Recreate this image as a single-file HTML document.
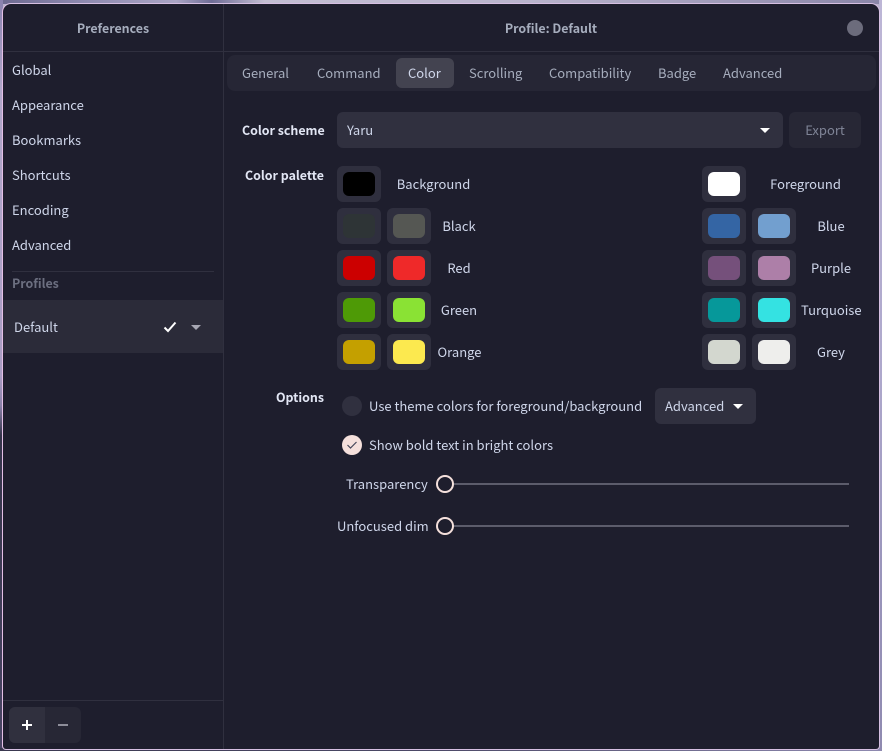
<!DOCTYPE html>
<html><head><meta charset="utf-8">
<style>
html,body{margin:0;padding:0;width:882px;height:751px;overflow:hidden;background:#b9b3cc}
body{position:relative;font-family:"Noto Sans CJK JP","Liberation Sans",sans-serif;font-size:13px;color:#cfd6ea}
#bgt{position:absolute;left:0;top:0;width:882px;height:4px;background:linear-gradient(90deg,#6d6a90 0,#8f8bb0 10%,#aaa5c4 20%,#6f6d96 24%,#c3bed2 30%,#b9b4cc 60%,#8a86a8 100%)}
#bgl{position:absolute;left:0;top:0;width:3px;height:751px;background:linear-gradient(180deg,#8a82ae 0,#b0a6c8 12%,#a99cc2 50%,#8a80a8 54%,#35344a 58%,#3a384f 70%,#4a4565 100%)}
#bgr{position:absolute;right:0;top:0;width:3px;height:751px;background:linear-gradient(180deg,#bdb6d6 0,#aea8cc 50%,#9b96bc 75%,#8f8ab0 100%)}
#bgb{position:absolute;left:0;bottom:0;width:882px;height:3px;background:linear-gradient(90deg,#3a384f,#4d4a68 50%,#8f8ab0)}
#win{position:absolute;left:2px;top:3px;width:876px;height:745px;background:#1e1e2d;border:1px solid #d6bfe2;border-left-color:#e4bfe6;border-radius:9px 9px 4px 4px;overflow:hidden}
.a{position:absolute;box-sizing:border-box}
.t{position:absolute;white-space:nowrap;line-height:20px;height:20px}
.c{text-align:center}
.b{font-weight:700;font-size:12.4px}
.ln{position:absolute;background:#30303f}
.sw{position:absolute;width:44px;height:36px;background:#2f2f3e;border-radius:6px}
.sw i{position:absolute;left:6px;top:6px;width:32px;height:24px;border-radius:6px;display:block}
.arrow{position:absolute;width:0;height:0;border-left:5px solid transparent;border-right:5px solid transparent;border-top:5px solid #fff}
.track{position:absolute;left:452px;width:397px;height:2px;background:#5c5c6b}
.thumb{position:absolute;left:436px;width:18px;height:18px;box-sizing:border-box;border:2px solid #f5e0dc;border-radius:50%;background:#1e1e2d}
#win>*{margin-left:-3px;margin-top:-4px}
</style></head>
<body>
<div id="bgt"></div><div id="bgl"></div><div id="bgr"></div><div id="bgb"></div>
<div id="win">
<div class="ln" style="left:223px;top:0;width:1px;height:760px"></div>
<div class="ln" style="left:0;top:51px;width:890px;height:1px"></div>
<div class="ln" style="left:0;top:700px;width:223px;height:1px"></div>
<div class="ln" style="left:12px;top:271px;width:202px;height:1px"></div>

<div class="t c b" style="left:3px;top:18px;width:220px;color:#a6adbd">Preferences</div>
<div class="t c b" style="left:224px;top:18px;width:654px;color:#a6adbd">Profile: Default</div>
<div class="a" style="left:847px;top:20px;width:16px;height:16px;border-radius:50%;background:#6c6c7c"></div>

<div class="t" style="left:12px;top:60px">Global</div>
<div class="t" style="left:12px;top:95px">Appearance</div>
<div class="t" style="left:12px;top:130px">Bookmarks</div>
<div class="t" style="left:12px;top:165px">Shortcuts</div>
<div class="t" style="left:12px;top:200px">Encoding</div>
<div class="t" style="left:12px;top:235px">Advanced</div>
<div class="t b" style="left:12px;top:273px;color:#6c6f80">Profiles</div>
<div class="a" style="left:3px;top:300px;width:220px;height:53px;background:#2b2b39"></div>
<div class="t" style="left:14px;top:317px">Default</div>
<svg class="a" style="left:163px;top:320px" width="14" height="14" viewBox="0 0 14 14"><path d="M1.5 7.5L5 11L12.5 2.5" fill="none" stroke="#fff" stroke-width="2"/></svg>
<div class="arrow" style="left:191px;top:325px;border-top-color:#a6a6b2"></div>

<div class="a" style="left:9px;top:707px;width:72px;height:36px;background:#272735;border-radius:6px"></div>
<div class="a" style="left:9px;top:707px;width:36px;height:36px;background:#30303e;border-radius:6px 0 0 6px"></div>
<div class="a" style="left:22px;top:724px;width:10px;height:2px;background:#fff"></div>
<div class="a" style="left:26px;top:720px;width:2px;height:10px;background:#fff"></div>
<div class="a" style="left:58px;top:724px;width:10px;height:2px;background:#8e8e9a"></div>

<div class="a" style="left:227px;top:55px;width:649px;height:36px;background:#262635;border-radius:8px"></div>
<div class="a" style="left:396px;top:58px;width:58px;height:30px;background:#434350;border-radius:6px"></div>
<div class="t" style="left:242px;top:63px;color:#a6adbd">General</div>
<div class="t" style="left:317px;top:63px;color:#a6adbd">Command</div>
<div class="t" style="left:408px;top:63px;color:#cfd6ea">Color</div>
<div class="t" style="left:469px;top:63px;color:#a6adbd">Scrolling</div>
<div class="t" style="left:549px;top:63px;color:#a6adbd">Compatibility</div>
<div class="t" style="left:658px;top:63px;color:#a6adbd">Badge</div>
<div class="t" style="left:723px;top:63px;color:#a6adbd">Advanced</div>

<div class="t b" style="left:242px;top:120px;color:#e2e6f4">Color scheme</div>
<div class="a" style="left:337px;top:112px;width:446px;height:36px;background:#30303f;border-radius:6px"></div>
<div class="t" style="left:347px;top:120px">Yaru</div>
<div class="arrow" style="left:760px;top:128px"></div>
<div class="a" style="left:789px;top:112px;width:72px;height:36px;background:#272735;border-radius:6px"></div>
<div class="t c" style="left:789px;top:120px;width:72px;color:#7f8496">Export</div>

<div class="t b" style="left:245px;top:165px;color:#e2e6f4">Color palette</div>

<div class="sw" style="left:337px;top:166px"><i style="background:#000"></i></div>
<div class="t c" style="left:381px;top:174px;width:105px">Background</div>
<div class="sw" style="left:337px;top:208px"><i style="background:#2e3436"></i></div>
<div class="sw" style="left:387px;top:208px"><i style="background:#555753"></i></div>
<div class="t c" style="left:431px;top:216px;width:56px">Black</div>
<div class="sw" style="left:337px;top:250px"><i style="background:#cc0000"></i></div>
<div class="sw" style="left:387px;top:250px"><i style="background:#ef2929"></i></div>
<div class="t c" style="left:431px;top:258px;width:56px">Red</div>
<div class="sw" style="left:337px;top:292px"><i style="background:#4e9a06"></i></div>
<div class="sw" style="left:387px;top:292px"><i style="background:#8ae234"></i></div>
<div class="t c" style="left:431px;top:300px;width:56px">Green</div>
<div class="sw" style="left:337px;top:334px"><i style="background:#c4a000"></i></div>
<div class="sw" style="left:387px;top:334px"><i style="background:#fce94f"></i></div>
<div class="t c" style="left:431px;top:342px;width:57px">Orange</div>

<div class="sw" style="left:702px;top:166px"><i style="background:#fff"></i></div>
<div class="t c" style="left:750px;top:174px;width:111px">Foreground</div>
<div class="sw" style="left:702px;top:208px"><i style="background:#3465a4"></i></div>
<div class="sw" style="left:752px;top:208px"><i style="background:#729fcf"></i></div>
<div class="t c" style="left:801px;top:216px;width:60px">Blue</div>
<div class="sw" style="left:702px;top:250px"><i style="background:#75507b"></i></div>
<div class="sw" style="left:752px;top:250px"><i style="background:#ad7fa8"></i></div>
<div class="t c" style="left:801px;top:258px;width:60px">Purple</div>
<div class="sw" style="left:702px;top:292px"><i style="background:#06989a"></i></div>
<div class="sw" style="left:752px;top:292px"><i style="background:#34e2e2"></i></div>
<div class="t c" style="left:801px;top:300px;width:60px">Turquoise</div>
<div class="sw" style="left:702px;top:334px"><i style="background:#d3d7cf"></i></div>
<div class="sw" style="left:752px;top:334px"><i style="background:#eeeeec"></i></div>
<div class="t c" style="left:801px;top:342px;width:60px">Grey</div>

<div class="t b" style="left:276px;top:387px;color:#e2e6f4">Options</div>
<div class="a" style="left:342px;top:396px;width:20px;height:20px;border-radius:50%;background:#30303f"></div>
<div class="t" style="left:369px;top:396px">Use theme colors for foreground/background</div>
<div class="a" style="left:655px;top:388px;width:101px;height:36px;background:#30303f;border-radius:6px"></div>
<div class="t" style="left:665px;top:396px">Advanced</div>
<div class="arrow" style="left:733px;top:404px"></div>

<div class="a" style="left:342px;top:435px;width:20px;height:20px;border-radius:50%;background:#f5e0dc"></div>
<svg class="a" style="left:345px;top:438px" width="14" height="14" viewBox="0 0 14 14"><path d="M2.5 7L5.5 10L11.5 4" fill="none" stroke="#45475a" stroke-width="1.2"/></svg>
<div class="t" style="left:369px;top:435px">Show bold text in bright colors</div>

<div class="t" style="left:346px;top:474px">Transparency</div>
<div class="track" style="top:483px"></div>
<div class="thumb" style="top:475px"></div>
<div class="t" style="left:337px;top:516px">Unfocused dim</div>
<div class="track" style="top:525px"></div>
<div class="thumb" style="top:517px"></div>
</div>
</body></html>
